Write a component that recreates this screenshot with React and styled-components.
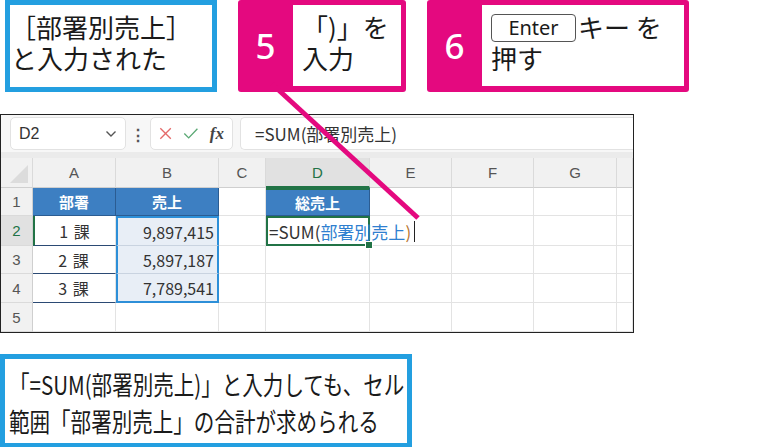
import styled, { createGlobalStyle } from "styled-components";

const Global = createGlobalStyle`
  html, body { margin: 0; padding: 0; background: #fff; }
  body { font-family: "Noto Sans CJK JP", "Noto Sans", sans-serif; color: #222; }
`;

const BLUE = "#239fe0";
const PINK = "#e4097f";
const GREEN = "#217346";

const Page = styled.div`
  position: relative;
  width: 783px;
  height: 447px;
  overflow: hidden;
`;

const CalloutRow = styled.div`
  display: flex;
  height: 92px;
  padding-left: 5px;
  gap: 21px;
`;

const BlueBox = styled.div`
  box-sizing: border-box;
  width: ${({ w }) => w}px;
  height: ${({ h }) => h}px;
  border: 5px solid ${BLUE};
  padding: ${({ pad }) => pad};
  font-size: ${({ fs }) => fs}px;
  line-height: ${({ lh }) => lh}px;
  color: #1a1a1a;
  background: #fff;
`;

const PinkBox = styled.div`
  box-sizing: border-box;
  display: flex;
  width: ${({ w }) => w}px;
  height: 92px;
  background: ${PINK};
  border-radius: 3px;
  padding: 5px 5px 6px 0;
`;

const StepNum = styled.div`
  width: 55px;
  display: flex;
  align-items: center;
  justify-content: center;
  color: #fff;
  font-family: "Noto Sans", sans-serif;
  font-weight: 500;
  font-size: 35px;
`;

const StepText = styled.div`
  flex: 1;
  background: #fff;
  padding: 6px 0 0 9px;
  font-size: 26px;
  line-height: 31px;
  color: #1a1a1a;
`;

const Key = styled.span`
  display: inline-flex;
  align-items: center;
  justify-content: center;
  box-sizing: border-box;
  width: 85px;
  height: 28px;
  border: 1px solid #555;
  border-radius: 4px;
  font-family: "Noto Sans", sans-serif;
  font-size: 20px;
  line-height: 1;
  vertical-align: 3px;
  margin-right: 2px;
`;

const Sheet = styled.div`
  box-sizing: border-box;
  margin-top: 22px;
  width: 634px;
  height: 219px;
  border: 1px solid #222;
  background: #f7f7f7;
  overflow: hidden;
`;

const FormulaBar = styled.div`
  display: flex;
  align-items: center;
  height: 37px;
  padding-left: 9px;
`;

const Field = styled.div`
  box-sizing: border-box;
  display: flex;
  align-items: center;
  justify-content: ${({ spread }) => (spread ? "space-between" : "flex-start")};
  height: 33px;
  width: ${({ w }) => (w ? `${w}px` : "auto")};
  flex: ${({ w }) => (w ? "none" : 1)};
  background: #fff;
  border: 1px solid #e2e2e2;
  border-right: ${({ open }) => (open ? "none" : "1px solid #e2e2e2")};
  border-radius: ${({ open }) => (open ? "5px 0 0 5px" : "5px")};
  padding: 0 8px;
  gap: ${({ gap }) => gap || 0}px;
  font-family: "Liberation Sans", sans-serif;
  font-size: 16px;
  color: #333;
`;

const Dots = styled.div`
  width: 24px;
  text-align: center;
  color: #555;
  font-size: 16px;
  font-weight: bold;
`;

const Fx = styled.span`
  font-family: "Liberation Serif", serif;
  font-style: italic;
  font-weight: bold;
  font-size: 17px;
  color: #444;
`;

const FormulaText = styled.span`
  font-family: "Noto Sans CJK JP", sans-serif;
  font-size: 17px;
  color: #333;
  padding-left: 6px;
`;

const Grid = styled.div`
  display: grid;
  grid-template-columns: 32px 83px 103px 47px 104px 82px 82px 83px 1fr;
  grid-template-rows: 6px 30px 28px 30px 28px 29px 29px;
`;

const Band = styled.div`
  grid-column: 1 / -1;
  background: #ebebeb;
`;

const ColHead = styled.div`
  box-sizing: border-box;
  display: flex;
  align-items: center;
  justify-content: center;
  background: ${({ active }) => (active ? "#e1e1e1" : "#f1f1f1")};
  border-right: 1px solid #dadada;
  border-bottom: ${({ active }) => (active ? `2px solid ${GREEN}` : "1px solid #cfcfcf")};
  color: ${({ active }) => (active ? GREEN : "#555")};
  font-family: "Liberation Sans", sans-serif;
  font-size: 15px;
`;

const Corner = styled(ColHead)`
  position: relative;
  &::after {
    content: "";
    position: absolute;
    right: 4px;
    bottom: 4px;
    border-left: 18px solid transparent;
    border-bottom: 18px solid #dcdcdc;
  }
`;

const RowHead = styled.div`
  box-sizing: border-box;
  display: flex;
  align-items: center;
  justify-content: center;
  background: ${({ active }) => (active ? "#e1e1e1" : "#f1f1f1")};
  border-right: 1px solid #cfcfcf;
  border-bottom: 1px solid #dadada;
  color: ${({ active }) => (active ? GREEN : "#555")};
  font-family: "Liberation Sans", sans-serif;
  font-size: 15px;
`;

const Cell = styled.div`
  box-sizing: border-box;
  display: flex;
  align-items: center;
  justify-content: flex-start;
  padding: 0 4px;
  background: #fff;
  border-right: 1px solid #e3e3e3;
  border-bottom: 1px solid #e3e3e3;
  font-size: 16px;
  color: #333;
  white-space: nowrap;
`;

const HeadCell = styled(Cell)`
  justify-content: center;
  background: #3d7fc2;
  color: #fff;
  font-weight: bold;
  font-size: 15px;
  border-right: 1px solid #2b5c92;
  border-bottom: 1px solid #2b5c92;
  border-top: ${({ active }) => (active ? `2px solid ${GREEN}` : "none")};
`;

const DeptCell = styled(Cell)`
  justify-content: center;
  border-bottom: 1px solid #2b4a74;
  border-left: ${({ active }) => (active ? `2px solid ${GREEN}` : "none")};
  letter-spacing: 1px;
`;

const RangeCell = styled(Cell)`
  justify-content: flex-end;
  background: #e8eef6;
  border-bottom: ${({ last }) => (last ? `2px solid #2d8fd8` : "1px solid #c9d3e0")};
  border-top: ${({ first }) => (first ? `2px solid #2d8fd8` : "none")};
  border-left: 2px solid #2d8fd8;
  border-right: 2px solid #2d8fd8;
  padding-right: 3px;
`;

const EditCell = styled(Cell)`
  position: relative;
  overflow: visible;
  border: 2px solid ${GREEN};
  padding-left: 1px;
  font-size: 17px;
  z-index: 2;
  &::after {
    content: "";
    position: absolute;
    right: -5px;
    bottom: -5px;
    width: 6px;
    height: 6px;
    background: ${GREEN};
    border: 1px solid #fff;
  }
`;

const EditText = styled.span`
  display: inline-flex;
  align-items: center;
  flex: none;
`;

const Ref = styled.span`
  color: ${({ c }) => c};
`;

const Caret = styled.span`
  display: inline-block;
  flex: none;
  width: 1px;
  height: 21px;
  background: #222;
  margin-left: 3px;
`;

const BottomBox = styled(BlueBox)`
  margin-top: 21px;
  overflow: hidden;
`;

const Squeeze = styled.div`
  transform: scaleX(0.79);
  transform-origin: left center;
  white-space: nowrap;
`;

const Leader = styled.svg`
  position: absolute;
  left: 0;
  top: 0;
  z-index: 5;
  pointer-events: none;
`;

const cols = ["A", "B", "C", "D", "E", "F", "G", ""];

export default function App() {
  return (
    <Page>
      <Global />
      <CalloutRow>
        <BlueBox w={212} h={92} pad="6px 0 0 0" fs={26} lh={31}>
          ［部署別売上］
          <br />
          <span style={{ paddingLeft: 1 }}>と入力された</span>
        </BlueBox>
        <PinkBox w={168}>
          <StepNum>5</StepNum>
          <StepText>
            「)」を
            <br />
            入力
          </StepText>
        </PinkBox>
        <PinkBox w={262}>
          <StepNum>6</StepNum>
          <StepText>
            <Key>Enter</Key>キー を
            <br />
            押す
          </StepText>
        </PinkBox>
      </CalloutRow>

      <Sheet>
        <FormulaBar>
          <Field w={116} spread>
            <span>D2</span>
            <svg width="12" height="8" viewBox="0 0 12 8">
              <path d="M1.5 1.5 L6 6 L10.5 1.5" fill="none" stroke="#555" strokeWidth="1.4" />
            </svg>
          </Field>
          <Dots>⋮</Dots>
          <Field w={83} gap={11}>
            <svg width="15" height="15" viewBox="0 0 15 15">
              <path d="M1.5 1.5 L13.5 13.5 M13.5 1.5 L1.5 13.5" stroke="#e46a6a" strokeWidth="1.5" />
            </svg>
            <svg width="18" height="15" viewBox="0 0 18 15">
              <path d="M1.5 7.5 L6.5 12.5 L16.5 2" fill="none" stroke="#5aa874" strokeWidth="1.5" />
            </svg>
            <Fx>fx</Fx>
          </Field>
          <div style={{ width: 7 }} />
          <Field open>
            <FormulaText>=SUM(部署別売上)</FormulaText>
          </Field>
        </FormulaBar>
        <Grid>
          <Band />
          <Corner />
          {cols.map((c, i) => (
            <ColHead key={i} active={c === "D"}>
              {c}
            </ColHead>
          ))}

          <RowHead>1</RowHead>
          <HeadCell>部署</HeadCell>
          <HeadCell>売上</HeadCell>
          <Cell />
          <HeadCell active>総売上</HeadCell>
          <Cell />
          <Cell />
          <Cell />
          <Cell />

          <RowHead active>2</RowHead>
          <DeptCell active>1 課</DeptCell>
          <RangeCell first>9,897,415</RangeCell>
          <Cell />
          <EditCell>
            <EditText>
              =SUM(<Ref c="#2f7fd0">部署別売上</Ref>
              <Ref c="#b8742e">)</Ref>
              <Caret />
            </EditText>
          </EditCell>
          <Cell />
          <Cell />
          <Cell />
          <Cell />

          <RowHead>3</RowHead>
          <DeptCell>2 課</DeptCell>
          <RangeCell>5,897,187</RangeCell>
          <Cell />
          <Cell />
          <Cell />
          <Cell />
          <Cell />
          <Cell />

          <RowHead>4</RowHead>
          <DeptCell>3 課</DeptCell>
          <RangeCell last>7,789,541</RangeCell>
          <Cell />
          <Cell />
          <Cell />
          <Cell />
          <Cell />
          <Cell />

          <RowHead>5</RowHead>
          {cols.map((c, i) => (
            <Cell key={i} />
          ))}
        </Grid>
      </Sheet>

      <BottomBox w={412} h={94} pad="6px 0 0 4px" fs={26} lh={37}>
        <Squeeze>
          「=SUM(部署別売上)」と入力しても、セル
          <br />
          範囲「部署別売上」の合計が求められる
        </Squeeze>
      </BottomBox>

      <Leader width="783" height="447">
        <line x1="272" y1="84" x2="418" y2="218" stroke={PINK} strokeWidth="5" />
      </Leader>
    </Page>
  );
}
